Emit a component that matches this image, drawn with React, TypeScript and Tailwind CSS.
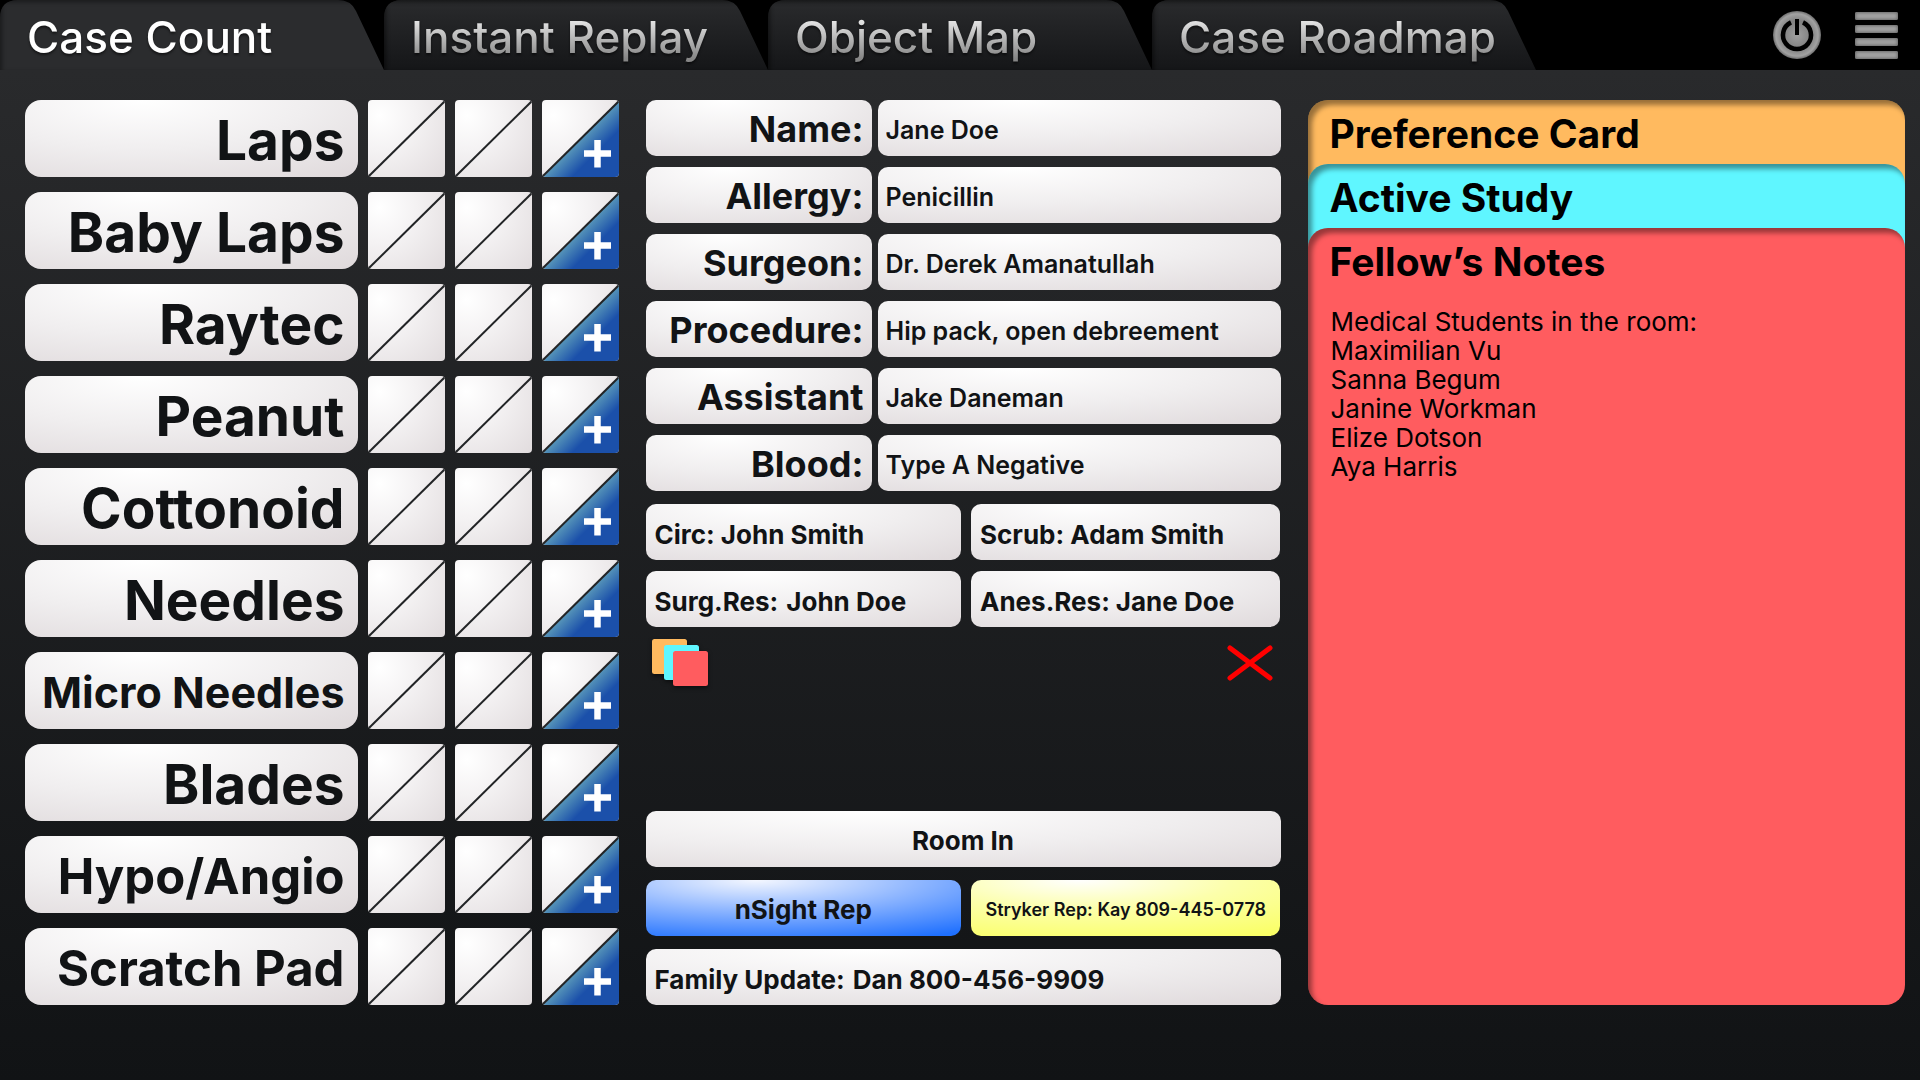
import clsx from "clsx";

const tabs = ["Case Count", "Instant Replay", "Object Map", "Case Roadmap"];

const counts = [
  { name: "Laps", size: "text-[55px]" },
  { name: "Baby Laps", size: "text-[55px]" },
  { name: "Raytec", size: "text-[55px]" },
  { name: "Peanut", size: "text-[55px]" },
  { name: "Cottonoid", size: "text-[55px]" },
  { name: "Needles", size: "text-[55px]" },
  { name: "Micro Needles", size: "text-[43px]" },
  { name: "Blades", size: "text-[55px]" },
  { name: "Hypo/Angio", size: "text-[49px]" },
  { name: "Scratch Pad", size: "text-[49px]" },
];

const fields = [
  { id: "name", label: "Name:", value: "Jane Doe" },
  { id: "allergy", label: "Allergy:", value: "Penicillin" },
  { id: "surgeon", label: "Surgeon:", value: "Dr. Derek Amanatullah" },
  { id: "procedure", label: "Procedure:", value: "Hip pack, open debreement" },
  { id: "assistant", label: "Assistant", value: "Jake Daneman" },
  { id: "blood", label: "Blood:", value: "Type A Negative" },
];

const students = ["Maximilian Vu", "Sanna Begum", "Janine Workman", "Elize Dotson", "Aya Harris"];

const pill = "bg-[radial-gradient(ellipse_100%_130%_at_35%_0%,#ffffff,#f0eeef_50%,#dfd9db)] text-[#111315]";
const tile = "bg-[radial-gradient(circle_at_15%_20%,#ffffff,#f4f2f3_40%,#ded8da_110%)]";
const card = "rounded-t-[20px] shadow-[inset_4px_5px_5px_rgba(0,0,0,0.4)]";

function Tab({ label, active }: { label: string; active: boolean }) {
  return (
    <button
      role="tab"
      aria-selected={active}
      className={clsx(
        "w-96 h-full pl-[27px] pt-1 text-left text-[44px] leading-[56px] font-medium whitespace-nowrap",
        "[clip-path:path('M0_70V18Q0_0_18_0H338Q351_0_356_11L384_70Z')]",
        active
          ? "bg-[#2b2c2e] shadow-[inset_2px_2px_4px_rgba(0,0,0,0.4)]"
          : "bg-linear-to-b from-[#2a2b2d] to-[#151618] shadow-[inset_2px_2px_4px_rgba(0,0,0,0.5)]",
      )}
    >
      <span
        className={clsx(
          "drop-shadow-[0_2px_1px_rgba(0,0,0,0.5)]",
          active
            ? "text-white"
            : "bg-linear-to-b from-[#e4e4e4] from-20% to-[#868686] to-90% bg-clip-text text-transparent",
        )}
      >
        {label}
      </span>
    </button>
  );
}

function PowerIcon() {
  return (
    <svg viewBox="0 0 48 48" className="size-12" fill="none">
      <defs>
        <radialGradient id="power">
          <stop offset="0" stopColor="#a0a0a0" />
          <stop offset="0.6" stopColor="#808080" />
          <stop offset="0.88" stopColor="#a2a2a2" />
          <stop offset="1" stopColor="#6e6e6e" />
        </radialGradient>
      </defs>
      <circle cx="24" cy="24" r="24" fill="url(#power)" />
      <path d="M30 11.4A14 14 0 1 1 18 11.4" stroke="#000" strokeWidth="4.5" />
      <path d="M24 8V24" stroke="#000" strokeWidth="4" />
    </svg>
  );
}

function CountTile({ name, index }: { name: string; index: number }) {
  return (
    <button aria-label={`${name} ${index}`} className={clsx("size-[77px] rounded overflow-hidden", tile)}>
      <svg viewBox="0 0 77 77" className="size-full">
        <path d="M0 77L77 1" stroke="#222426" strokeWidth="2" />
      </svg>
    </button>
  );
}

function AddTile({ name }: { name: string }) {
  return (
    <button aria-label={`Add ${name}`} className={clsx("size-[77px] rounded overflow-hidden", tile)}>
      <svg viewBox="0 0 77 77" className="size-full">
        <defs>
          <linearGradient id="add" gradientUnits="userSpaceOnUse" x1="30" y1="30" x2="77" y2="77">
            <stop offset="0.1" stopColor="#67a8bd" />
            <stop offset="0.5" stopColor="#1b50aa" />
          </linearGradient>
        </defs>
        <path d="M0 78L77 1V78Z" fill="url(#add)" />
        <path d="M0 77L77 1" stroke="#222426" strokeWidth="2" />
        <path d="M42 53.5H69M55.5 40V67.5" stroke="#fff" strokeWidth="6.5" />
      </svg>
    </button>
  );
}

function CountList() {
  return (
    <section className="flex flex-col gap-[15px]">
      {counts.map(({ name, size }) => (
        <div key={name} className="flex gap-2.5">
          <div
            className={clsx(
              "flex-1 h-[77px] flex items-center justify-end rounded-2xl pr-[13px] pt-1 font-bold leading-none whitespace-nowrap",
              pill,
              size,
            )}
          >
            {name}
          </div>
          <CountTile name={name} index={1} />
          <CountTile name={name} index={2} />
          <AddTile name={name} />
        </div>
      ))}
    </section>
  );
}

function CaseInfo() {
  const staff = clsx("h-14 flex items-center rounded-[10px] px-[9px] pt-1 text-[26px] font-bold whitespace-nowrap", pill);

  return (
    <section className="flex flex-col justify-between">
      <div>
        <div className="flex flex-col gap-[11px]">
          {fields.map(({ id, label, value }) => (
            <div key={id} className="flex gap-1.5">
              <label
                htmlFor={id}
                className={clsx(
                  "w-[226px] h-14 flex items-center justify-end rounded-[10px] pr-2 pt-0.5 text-[36px] font-bold leading-none",
                  pill,
                )}
              >
                {label}
              </label>
              <input
                id={id}
                defaultValue={value}
                className={clsx("flex-1 min-w-0 h-14 rounded-[10px] pl-2 pt-1 text-[25px] font-semibold", pill)}
              />
            </div>
          ))}
          <div className="mt-0.5 grid grid-cols-[315fr_309fr] gap-x-2.5 gap-y-[11px]">
            <div className={staff}>Circ: John Smith</div>
            <div className={staff}>Scrub: Adam Smith</div>
            <div className={clsx(staff, "gap-2")}>
              <span>Surg.Res:</span>
              <span>John Doe</span>
            </div>
            <div className={clsx(staff, "gap-1.5")}>
              <span>Anes.Res:</span>
              <span>Jane Doe</span>
            </div>
          </div>
        </div>

        <div className="mt-3 flex items-center justify-between pl-1.5 pr-2">
          <button aria-label="Notes">
            <svg viewBox="0 0 56 48" className="w-14 h-12 overflow-visible drop-shadow-[0_2px_2px_rgba(0,0,0,0.5)]">
              <rect width="35" height="35" rx="2.5" fill="#ffba5f" />
              <rect x="12" y="6" width="35" height="35" rx="2.5" fill="#5ff6ff" />
              <rect x="21" y="12" width="35" height="35" rx="2.5" fill="#ff5c5f" />
            </svg>
          </button>
          <button aria-label="Close">
            <svg viewBox="0 0 46 36" className="w-[46px] h-9">
              <path d="M3 3L43 33M43 3L3 33" stroke="#ff0000" strokeWidth="5" strokeLinecap="round" />
            </svg>
          </button>
        </div>
      </div>

      <div className="flex flex-col gap-[13px] font-bold text-[#111315]">
        <button className={clsx("h-14 rounded-[10px] pt-0.5 text-[26px]", pill)}>Room In</button>
        <div className="grid grid-cols-[315fr_309fr] gap-2.5">
          <button className="h-14 rounded-[10px] pt-0.5 text-[26px] bg-[radial-gradient(ellipse_110%_115%_at_35%_0%,#f4f7ff,#93b9ff_45%,#1f70ff)]">
            nSight Rep
          </button>
          <button className="h-14 rounded-[10px] pt-0.5 text-[18px] font-semibold whitespace-nowrap bg-[radial-gradient(ellipse_110%_115%_at_35%_0%,#ffffff,#fcffab_45%,#faff66)]">
            Stryker Rep: Kay 809-445-0778
          </button>
        </div>
        <div className={clsx("h-14 flex items-center gap-2 rounded-[10px] px-[9px] pt-1 text-[26px]", pill)}>
          <span>Family Update:</span>
          <span>Dan 800-456-9909</span>
        </div>
      </div>
    </section>
  );
}

function Notes() {
  const title = "block w-full pl-[22px] pt-1.5 text-left text-[39px] leading-[56px] font-bold";

  return (
    <section className="flex flex-col text-black">
      <div className={clsx("h-[84px] bg-[#ffba5f]", card)}>
        <button className={title}>Preference Card</button>
      </div>
      <div className={clsx("-mt-5 h-[84px] bg-[#5ff6ff]", card)}>
        <button className={title}>Active Study</button>
      </div>
      <div className={clsx("-mt-5 flex-1 rounded-b-[20px] bg-[#ff5c5f]", card)}>
        <button className={title}>Fellow’s Notes</button>
        <div className="px-[23px] pt-[17px] text-[26px] leading-[29px]">
          <p>Medical Students in the room:</p>
          {students.map((student) => (
            <p key={student}>{student}</p>
          ))}
        </div>
      </div>
    </section>
  );
}

export default function App() {
  return (
    <div className="min-h-screen flex flex-col bg-black font-[Inter,sans-serif]">
      <header className="h-[70px] flex items-center justify-between pr-[22px]">
        <nav role="tablist" className="h-full flex">
          {tabs.map((label, i) => (
            <Tab key={label} label={label} active={i === 0} />
          ))}
        </nav>
        <div className="flex items-center gap-[34px]">
          <button aria-label="Power">
            <PowerIcon />
          </button>
          <button aria-label="Menu" className="w-[43px] flex flex-col gap-[5px]">
            {[0, 1, 2, 3].map((i) => (
              <span key={i} className="h-2 w-full rounded-xs bg-[#a0a0a0] shadow-[inset_0_0_3px_1px_#6b6b6b]" />
            ))}
          </button>
        </div>
      </header>

      <main className="flex-1 grid grid-cols-[594fr_634fr_598fr] content-start gap-[27px] pl-[25px] pr-[15px] pt-[30px] pb-10 bg-linear-to-b from-[#292a2c] to-[#111315]">
        <CountList />
        <CaseInfo />
        <Notes />
      </main>
    </div>
  );
}
